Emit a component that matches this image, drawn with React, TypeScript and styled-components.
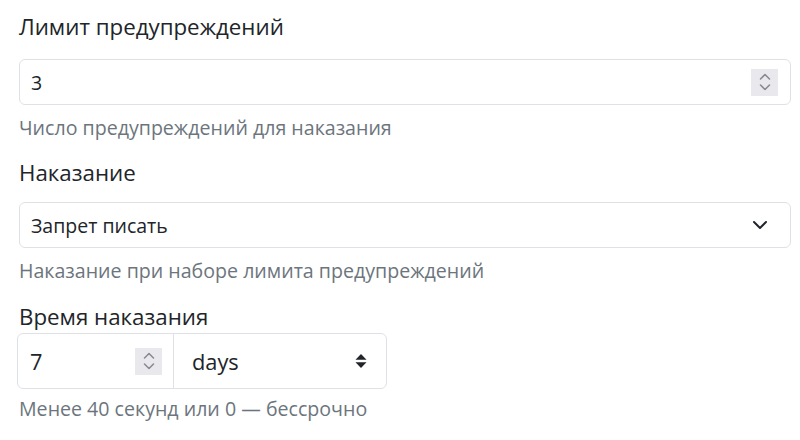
import React from "react";
import styled, { createGlobalStyle } from "styled-components";

const Global = createGlobalStyle`
  html, body { margin: 0; padding: 0; background: #ffffff; }
  body { font-family: "Open Sans", "Noto Sans", sans-serif; color: #212529; }
  * { box-sizing: border-box; }
`;

const Form = styled.div`
  width: 800px;
  padding: 12px 9px 0 19px;
  display: flex;
  flex-direction: column;
`;

const Field = styled.div<{ $gap?: number }>`
  display: flex;
  flex-direction: column;
  margin-bottom: ${(p) => p.$gap ?? 17}px;
`;

const Label = styled.div<{ $mb?: number }>`
  font-size: 22.3px;
  line-height: 30px;
  color: #212529;
  margin-bottom: ${(p) => p.$mb ?? 17}px;
`;

const Control = styled.div<{ $pr?: number }>`
  height: 46px;
  border: 1px solid #dee2e6;
  border-radius: 6px;
  display: flex;
  align-items: center;
  padding: 0 ${(p) => p.$pr ?? 12}px 0 11px;
  font-size: 19.5px;
  color: #212529;
  background: #fff;
`;

const Value = styled.span`
  flex: 1;
`;

const Help = styled.div<{ $mt?: number }>`
  margin-top: ${(p) => p.$mt ?? 10}px;
  font-size: 19.6px;
  line-height: 26px;
  color: #6c757d;
`;

const Spinner = styled.div`
  width: 27px;
  height: 27px;
  background: #e9e9ed;
  display: flex;
  align-items: center;
  justify-content: center;
`;

const Group = styled.div`
  display: flex;
  width: 370px;
  height: 56px;
  margin-left: -2px;
  border: 1px solid #dee2e6;
  border-radius: 6px;
  font-size: 21.8px;
`;

const GroupNumber = styled.div`
  width: 156px;
  display: flex;
  align-items: center;
  padding: 0 11px 0 12px;
  border-right: 1px solid #dee2e6;
`;

const GroupSelect = styled.div`
  flex: 1;
  display: flex;
  align-items: center;
  padding: 0 19px 0 18px;
`;

const SpinIcon = () => (
  <svg width="14" height="22" viewBox="0 0 14 22" fill="none" stroke="#8a8a94" strokeWidth="1.6" strokeLinecap="round" strokeLinejoin="round">
    <path d="M2.5 8 L7 3.5 L11.5 8" />
    <path d="M2.5 14 L7 18.5 L11.5 14" />
  </svg>
);

const Chevron = () => (
  <svg width="16" height="16" viewBox="0 0 16 16" fill="none" stroke="#212529" strokeWidth="2" strokeLinecap="round" strokeLinejoin="round">
    <path d="M2 5 L8 11 L14 5" />
  </svg>
);

const SortCaret = () => (
  <svg width="12" height="16" viewBox="0 0 12 16" fill="#212529">
    <path d="M6 1 L11.5 6.8 H0.5 Z" />
    <path d="M6 15 L11.5 9.2 H0.5 Z" />
  </svg>
);

export default function App() {
  return (
    <>
      <Global />
      <Form>
        <Field>
          <Label>Лимит предупреждений</Label>
          <Control>
            <Value>3</Value>
            <Spinner>
              <SpinIcon />
            </Spinner>
          </Control>
          <Help>Число предупреждений для наказания</Help>
        </Field>
        <Field $gap={18}>
          <Label $mb={14}>Наказание</Label>
          <Control $pr={22}>
            <Value>Запрет писать</Value>
            <Chevron />
          </Control>
          <Help>Наказание при наборе лимита предупреждений</Help>
        </Field>
        <Field>
          <Label $mb={1}>Время наказания</Label>
          <Group>
            <GroupNumber>
              <Value>7</Value>
              <Spinner>
                <SpinIcon />
              </Spinner>
            </GroupNumber>
            <GroupSelect>
              <Value>days</Value>
              <SortCaret />
            </GroupSelect>
          </Group>
          <Help $mt={7}>Менее 40 секунд или 0 — бессрочно</Help>
        </Field>
      </Form>
    </>
  );
}
